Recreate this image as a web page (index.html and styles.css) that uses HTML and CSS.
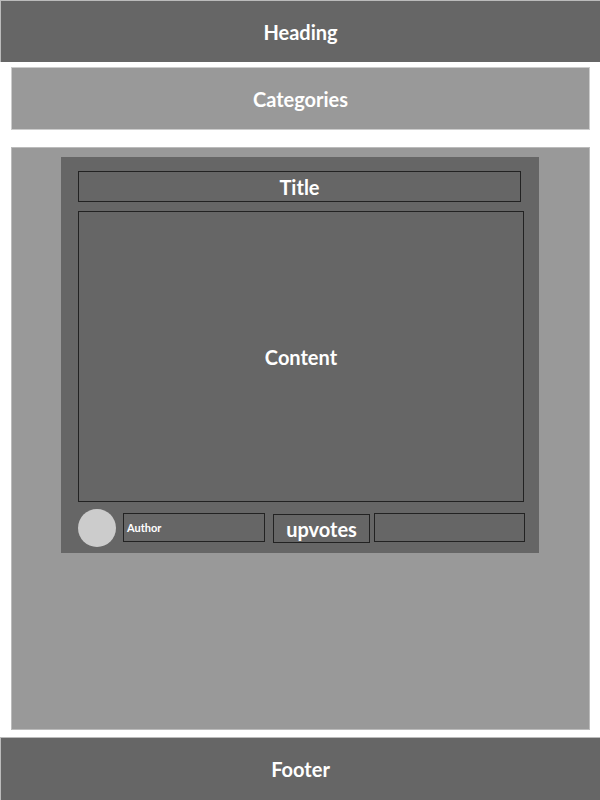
FILE: index.html
```html
<!DOCTYPE html>
<html>
<head>
<meta charset="utf-8">
<link rel="stylesheet" href="styles.css">
</head>
<body>
<header class="heading">Heading</header>
<nav class="categories">Categories</nav>
<main class="main">
  <article class="card">
    <div class="title">Title</div>
    <div class="content">Content</div>
    <div class="meta">
      <div class="avatar"></div>
      <div class="author">Author</div>
      <div class="upvotes">upvotes</div>
      <div class="extra"></div>
    </div>
  </article>
</main>
<footer class="footer">Footer</footer>
</body>
</html>
```
FILE: styles.css
```css
* { box-sizing: border-box; }
html, body { margin: 0; padding: 0; background: #fff; }
body {
  font-family: Lato, "Liberation Sans", sans-serif;
  font-weight: 700;
  color: #fff;
  width: 600px;
  height: 800px;
  overflow: hidden;
}
.heading {
  height: 62px;
  background: #666;
  border: 1px solid #bbb;
  border-right: none;
  border-bottom: none;
  display: flex;
  align-items: center;
  justify-content: center;
  font-size: 20px;
}
.categories {
  margin: 5px 10px 0 11px;
  height: 63px;
  background: #999;
  border: 1px solid #ccc;
  display: flex;
  align-items: center;
  justify-content: center;
  font-size: 20px;
}
.main {
  margin: 17px 10px 0 11px;
  height: 583px;
  background: #999;
  border: 1px solid #bbb;
  padding: 9px 0 0 49px;
}
.card {
  width: 478px;
  height: 396px;
  background: #666;
  padding: 14px 14px 0 17px;
}
.title {
  width: 443px;
  height: 31px;
  border: 1px solid #222;
  display: flex;
  align-items: center;
  justify-content: center;
  font-size: 20px;
}
.content {
  margin-top: 9px;
  width: 446px;
  height: 291px;
  border: 1px solid #222;
  display: flex;
  align-items: center;
  justify-content: center;
  font-size: 20px;
}
.meta {
  margin-top: 7px;
  display: flex;
  align-items: flex-start;
}
.avatar {
  width: 38px;
  height: 38px;
  border-radius: 50%;
  background: #ccc;
}
.author {
  margin: 4px 0 0 7px;
  width: 142px;
  height: 29px;
  border: 1px solid #222;
  font-size: 11px;
  display: flex;
  align-items: center;
  padding-left: 3px;
}
.upvotes {
  margin: 5px 0 0 8px;
  width: 97px;
  height: 29px;
  border: 1px solid #222;
  font-size: 20px;
  display: flex;
  align-items: center;
  justify-content: center;
  padding-top: 1px;
}
.extra {
  margin: 4px 0 0 4px;
  width: 151px;
  height: 29px;
  border: 1px solid #222;
}
.footer {
  margin-top: 7px;
  height: 63px;
  background: #666;
  border: 1px solid #bbb;
  border-right: none;
  border-bottom: none;
  display: flex;
  align-items: center;
  justify-content: center;
  font-size: 20px;
}
```
